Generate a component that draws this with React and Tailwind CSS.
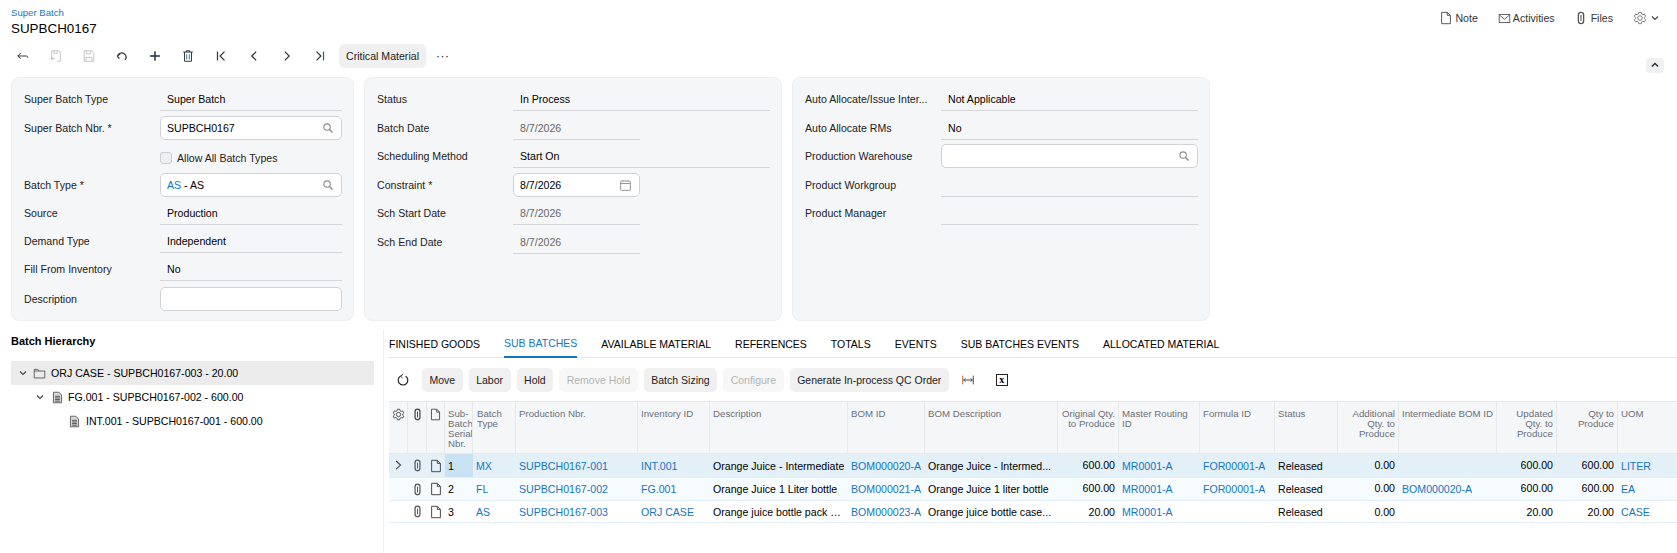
import React from "react";

const Ico = ({ size = 16, className = "", children }) => (
  <svg width={size} height={size} viewBox="0 0 16 16" fill="none" stroke="currentColor" strokeWidth="1.1" className={className}>
    {children}
  </svg>
);

const FileIcon = ({ size = 14, className = "text-[#444]" }) => (
  <Ico size={size} className={className}>
    <path d="M3 1.5h6.5L13 5v9.5H3z" />
    <path d="M9.5 1.5V5H13" />
  </Ico>
);

const ClipIcon = ({ size = 14, className = "text-[#555]" }) => (
  <Ico size={size} className={className}>
    <path d="M5 4.5a3 3 0 0 1 6 0v7a3 3 0 0 1-6 0z" strokeWidth="1.5" />
    <path d="M8 4.5v7" strokeWidth="1.2" />
  </Ico>
);

const GearIcon = ({ size = 14, className = "text-[#555]" }) => (
  <Ico size={size} className={className}>
    <path d="M6.6 1.5h2.8l.4 1.8 1.5.9 1.8-.6 1.4 2.4-1.4 1.2v1.6l1.4 1.2-1.4 2.4-1.8-.6-1.5.9-.4 1.8H6.6l-.4-1.8-1.5-.9-1.8.6-1.4-2.4 1.4-1.2V7.2L1.5 6l1.4-2.4 1.8.6 1.5-.9z" />
    <circle cx="8" cy="8" r="2.6" />
  </Ico>
);

const SearchIcon = () => (
  <Ico size={12} className="text-[#8a8a8a]">
    <circle cx="6.8" cy="6.8" r="4.3" strokeWidth="1.4" />
    <path d="M10 10l4 4" strokeWidth="1.8" />
  </Ico>
);

const DocFilled = () => (
  <Ico size={13} className="text-[#555]">
    <path d="M3 1.5h6.5L13 5v9.5H3z" fill="#d8d8d8" />
    <path d="M5 6.5h6M5 8.5h6M5 10.5h6M5 12.5h6" strokeWidth="1.2" />
  </Ico>
);

const Chevron = () => (
  <Ico size={12} className="text-[#444]">
    <path d="M4 6l4 4 4-4" strokeWidth="1.5" />
  </Ico>
);

const toolbarIcons = [
  { muted: false, el: <><path d="M5.5 4.5L2 8l3.5 3" /><path d="M2 8h9.5c1.2 0 2 .7 2 2" /></> },
  { muted: true, el: <><path d="M3 12V2h8l2 2v10h-4" /><path d="M5.5 2v3h4V2" /><path d="M7 11H2.5M4.5 9l-2 2 2 2" /></> },
  { muted: true, el: <><path d="M2.5 2h9l2 2v10h-11z" /><path d="M5 2v3.5h5V2M4.5 14V9.5h7V14" /></> },
  { muted: false, el: <><path d="M2.5 8L5 11M2.5 8L6 5.5" strokeWidth="1.4" /><path d="M3 7.5C5 4.5 8 4 10.5 5.5c2.5 1.6 3 4.5 1 7" strokeWidth="1.4" /></> },
  { muted: false, el: <path d="M8 2.5v11M2.5 8h11" strokeWidth="1.6" className="text-[#1b2a3a]" /> },
  { muted: false, el: <><path d="M2.5 3.5h11M6 3.5V2h4v1.5M4 3.5V14h8V3.5" /><path d="M6.5 6v6M9.5 6v6" stroke="#3a6fa5" /></> },
  { muted: false, el: <><path d="M4 3v10" strokeWidth="1.4" /><path d="M12 3L7 8l5 5" strokeWidth="1.4" /></> },
  { muted: false, el: <path d="M10.5 3L5.5 8l5 5" strokeWidth="1.4" /> },
  { muted: false, el: <path d="M5.5 3l5 5-5 5" strokeWidth="1.4" /> },
  { muted: false, el: <><path d="M4 3l5 5-5 5" strokeWidth="1.4" /><path d="M12 3v10" strokeWidth="1.4" stroke="#2a5f94" /></> },
];

// read only value with a line under it
const Field = ({ label, value, width = "w-[182px]", muted = false }) => (
  <div className="flex h-[24px] items-center">
    <div className="w-[136px] shrink-0 truncate leading-[14px] text-[#222]">{label}</div>
    <div className={`${width} flex h-[24px] items-center border-b border-[#d4d6d9] px-[7px] pt-[1px] ${muted ? "text-[#666]" : "text-black"}`}>
      {value}
    </div>
  </div>
);

const Input = ({ label, value, icon, width = "w-[182px]" }) => (
  <div className="flex h-[24px] items-center">
    <div className="w-[136px] shrink-0 truncate leading-[14px] text-[#222]">{label}</div>
    <div className={`${width} flex h-[24px] items-center justify-between rounded-[5px] border border-[#cfd2d6] bg-white pl-[6px] pr-[7px] text-black`}>
      <span>{value}</span>
      {icon}
    </div>
  </div>
);

const tabs = ["FINISHED GOODS", "SUB BATCHES", "AVAILABLE MATERIAL", "REFERENCES", "TOTALS", "EVENTS", "SUB BATCHES EVENTS", "ALLOCATED MATERIAL"];

const gridButtons = [
  ["Move", false],
  ["Labor", false],
  ["Hold", false],
  ["Remove Hold", true],
  ["Batch Sizing", false],
  ["Configure", true],
  ["Generate In-process QC Order", false],
];

const columns = [
  { name: "Production Nbr." },
  { name: "Inventory ID" },
  { name: "Description" },
  { name: "BOM ID" },
  { name: "BOM Description" },
  { name: <>Original Qty.<br />to Produce</>, right: true },
  { name: <>Master Routing<br />ID</> },
  { name: "Formula ID" },
  { name: "Status" },
  { name: <>Additional<br />Qty. to<br />Produce</>, right: true },
  { name: "Intermediate BOM ID" },
  { name: <>Updated<br />Qty. to<br />Produce</>, right: true },
  { name: <>Qty to<br />Produce</>, right: true },
  { name: "UOM" },
];

const rows = [
  {
    no: "1", type: "MX", prod: "SUPBCH0167-001", inv: "INT.001", desc: "Orange Juice - Intermediate", bom: "BOM000020-A",
    bomDesc: "Orange Juice - Intermed...", orig: "600.00", route: "MR0001-A", formula: "FOR00001-A", status: "Released",
    add: "0.00", inter: "", upd: "600.00", qty: "600.00", uom: "LITER",
    bg: "bg-[#e4f0f8]", h: "h-[24px]", lift: "pb-[2px]",
  },
  {
    no: "2", type: "FL", prod: "SUPBCH0167-002", inv: "FG.001", desc: "Orange Juice 1 Liter bottle", bom: "BOM000021-A",
    bomDesc: "Orange Juice 1 liter bottle", orig: "600.00", route: "MR0001-A", formula: "FOR00001-A", status: "Released",
    add: "0.00", inter: "BOM000020-A", upd: "600.00", qty: "600.00", uom: "EA",
    bg: "bg-[#f6fbfe]", h: "h-[23px]", lift: "pb-[2px]",
  },
  {
    no: "3", type: "AS", prod: "SUPBCH0167-003", inv: "ORJ CASE", desc: "Orange juice bottle pack …", bom: "BOM000023-A",
    bomDesc: "Orange juice bottle case...", orig: "20.00", route: "MR0001-A", formula: "", status: "Released",
    add: "0.00", inter: "", upd: "20.00", qty: "20.00", uom: "CASE",
    bg: "bg-white", h: "h-[22px]", lift: "",
  },
];

const gridCols = "grid-cols-[19px_19px_18px_28px_43px_122px_72px_138px_77px_133px_61px_81px_75px_63px_61px_98px_60px_61px_59px]";

const Cell = ({ children, link, right, className = "" }) => (
  <div className={`flex min-w-0 items-center px-[3px] ${right ? "justify-end pr-[4px]" : ""} ${link ? "text-[#1376c4]" : "text-black"} ${className}`}>
    <span className="truncate leading-[14px]">{children}</span>
  </div>
);

export default function App() {
  return (
    <div className="h-[553px] w-[1677px] overflow-hidden bg-white font-['Liberation_Sans',Arial,sans-serif] text-[10.6px] leading-none text-black">
      {/* title */}
      <div className="flex h-[44px] items-start justify-between pl-[11px] pr-[16px]">
        <div className="pt-[8px]">
          <div className="text-[9.6px] leading-[10px] text-[#1376c4]">Super Batch</div>
          <div className="pt-[3px] text-[13.4px] leading-[16px]">SUPBCH0167</div>
        </div>
        <div className="flex items-center pt-[11px] text-[#333]">
          <FileIcon size={14} className="text-[#555]" />
          <span className="ml-[2px]">Note</span>
          <Ico size={13} className="ml-[20px] text-[#555]"><rect x="1.5" y="3" width="13" height="10" /><path d="M1.5 3.5L8 9l6.5-5.5" /></Ico>
          <span className="ml-[2px]">Activities</span>
          <ClipIcon size={14} className="ml-[19px] text-[#555]" />
          <span className="ml-[3px]">Files</span>
          <GearIcon size={14} className="ml-[20px] text-[#777]" />
          <span className="ml-[2px]"><Chevron /></span>
        </div>
      </div>

      {/* main toolbar */}
      <div className="flex h-[24px] items-center pl-[6px] pr-[13px]">
        {toolbarIcons.map((t, i) => (
          <div key={i} className={`flex h-[24px] w-[33px] items-center justify-center ${t.muted ? "text-[#c4c4c4]" : "text-[#333]"}`}>
            <Ico size={14}>{t.el}</Ico>
          </div>
        ))}
        <button className="ml-[3px] h-[24px] w-[87px] rounded-[5px] bg-[#f0f0f0] text-[#222]">Critical Material</button>
        <div className="ml-[10px] text-[12px] tracking-[0.5px] text-[#222]">···</div>
        <div className="ml-auto mt-[18px] flex h-[15px] w-[18px] items-center justify-center rounded-[4px] bg-[#f0f0f0] text-[#1b2a3a]">
          <Ico size={10}><path d="M3 10.5L8 5.5l5 5" strokeWidth="2" /></Ico>
        </div>
      </div>

      {/* form panels */}
      <div className="ml-[11px] mt-[9px] flex h-[244px] gap-[10px]">
        <div className="w-[343px] rounded-[8px] border border-[#eceef0] bg-[#f5f6f8] pl-[12px] pr-[11px] pt-[9px]">
          <Field label="Super Batch Type" value="Super Batch" />
          <div className="mt-[5px]"><Input label="Super Batch Nbr. *" value="SUPBCH0167" icon={<SearchIcon />} /></div>
          <div className="mt-[6px] flex h-[24px] items-center pl-[136px] text-[#222]">
            <div className="h-[12px] w-[12px] rounded-[3px] border border-[#c9ccd0] bg-[#eceef0]" />
            <span className="ml-[5px]">Allow All Batch Types</span>
          </div>
          <div className="mt-[3px]">
            <Input label="Batch Type *" value={<><span className="text-[#1376c4]">AS</span> - AS</>} icon={<SearchIcon />} />
          </div>
          <div className="mt-[4px]"><Field label="Source" value="Production" /></div>
          <div className="mt-[4px]"><Field label="Demand Type" value="Independent" /></div>
          <div className="mt-[4px]"><Field label="Fill From Inventory" value="No" /></div>
          <div className="mt-[6px]"><Input label="Description" value="" /></div>
        </div>

        <div className="w-[418px] rounded-[8px] border border-[#eceef0] bg-[#f5f6f8] pl-[12px] pr-[11px] pt-[9px]">
          <Field label="Status" value="In Process" width="w-[258px]" />
          <div className="mt-[5px]"><Field label="Batch Date" value="8/7/2026" width="w-[127px]" muted /></div>
          <div className="mt-[4px]"><Field label="Scheduling Method" value="Start On" width="w-[258px]" /></div>
          <div className="mt-[5px]">
            <Input
              label="Constraint *"
              value="8/7/2026"
              width="w-[127px]"
              icon={<Ico size={13} className="text-[#888]"><rect x="2" y="2.5" width="12" height="11.5" rx="1" /><path d="M2 5.5h12M5 1.5v1M11 1.5v1" /></Ico>}
            />
          </div>
          <div className="mt-[4px]"><Field label="Sch Start Date" value="8/7/2026" width="w-[127px]" muted /></div>
          <div className="mt-[5px]"><Field label="Sch End Date" value="8/7/2026" width="w-[127px]" muted /></div>
        </div>

        <div className="w-[418px] rounded-[8px] border border-[#eceef0] bg-[#f5f6f8] pl-[12px] pt-[9px]">
          <Field label="Auto Allocate/Issue Inter..." value="Not Applicable" width="w-[257px]" />
          <div className="mt-[5px]"><Field label="Auto Allocate RMs" value="No" width="w-[257px]" /></div>
          <div className="mt-[4px]"><Input label="Production Warehouse" value="" width="w-[257px]" icon={<SearchIcon />} /></div>
          <div className="mt-[5px]"><Field label="Product Workgroup" value="" width="w-[257px]" /></div>
          <div className="mt-[4px]"><Field label="Product Manager" value="" width="w-[257px]" /></div>
        </div>
      </div>

      {/* bottom */}
      <div className="mt-[9px] flex h-[223px]">
        <div className="w-[384px] shrink-0 border-r border-[#eceef0] pl-[11px] pr-[9px]">
          <div className="pt-[6px] text-[11px] font-bold leading-[11px]">Batch Hierarchy</div>
          <div className="mt-[14px]">
            <div className="flex h-[24px] items-center bg-[#ebebeb] pl-[6px]">
              <Chevron />
              <Ico size={13} className="ml-[4px] text-[#555]"><path d="M1.5 3h4.5l1.5 2h7v8.5h-13z" /><path d="M1.5 5h6" /></Ico>
              <span className="ml-[5px]">ORJ CASE - SUPBCH0167-003 - 20.00</span>
            </div>
            <div className="flex h-[24px] items-center pl-[23px]">
              <Chevron />
              <span className="ml-[5px]"><DocFilled /></span>
              <span className="ml-[4px]">FG.001 - SUPBCH0167-002 - 600.00</span>
            </div>
            <div className="flex h-[24px] items-center pl-[57px]">
              <DocFilled />
              <span className="ml-[5px]">INT.001 - SUPBCH0167-001 - 600.00</span>
            </div>
          </div>
        </div>

        <div className="min-w-0 flex-1 pl-[5px]">
          {/* tabs */}
          <div className="flex h-[28px] gap-[24px] border-b border-[#e3e5e8] text-[10.5px]">
            {tabs.map((t) => (
              <div
                key={t}
                className={`flex h-[28px] items-center ${t === "SUB BATCHES" ? "border-b-2 border-[#1376c4] text-[#1376c4]" : "text-black"}`}
              >
                {t}
              </div>
            ))}
          </div>

          {/* grid toolbar */}
          <div className="mt-[10px] flex h-[24px] items-center">
            <div className="flex h-[24px] w-[28px] items-center justify-center text-[#222]">
              <Ico size={14}><path d="M5 3.6a5.5 5.5 0 1 0 6 0" strokeWidth="1.3" /><path d="M8 1.5L5 3.6l2.5 2" strokeWidth="1.1" /></Ico>
            </div>
            <div className="ml-[5px] flex gap-[6px] text-[10.5px]">
              {gridButtons.map(([name, off]) => (
                <button key={name} className={`h-[24px] rounded-[5px] px-[7.5px] ${off ? "bg-[#f7f7f7] text-[#b4b4b4]" : "bg-[#f0f0f0] text-[#222]"}`}>
                  {name}
                </button>
              ))}
            </div>
            <div className="ml-[2px] flex h-[24px] w-[34px] items-center justify-center text-[#444]">
              <Ico size={14}><path d="M2 3v10" stroke="#b5651d" /><path d="M14 3v10M3 8h10M3 8l2-2M3 8l2 2M13 8l-2-2M13 8l-2 2" /></Ico>
            </div>
            <div className="flex h-[24px] w-[34px] items-center justify-center">
              <div className="flex h-[12px] w-[12px] items-center justify-center border border-[#222] font-['Liberation_Serif',serif] text-[10px] font-bold leading-none">x</div>
            </div>
          </div>

          {/* grid */}
          <div className="mt-[9px] w-[1288px]">
            <div className={`grid h-[53px] ${gridCols} border-y border-[#e6e8ea] bg-[#f5f6f8] text-[9.7px] leading-[10px] text-[#6a7078]`}>
              <div className="flex justify-center border-r border-[#e6e8ea] pt-[6px]"><GearIcon size={13} className="text-[#444]" /></div>
              <div className="flex justify-center border-r border-[#e6e8ea] pt-[6px]"><ClipIcon size={13} className="text-[#444]" /></div>
              <div className="flex justify-center border-r border-[#e6e8ea] pt-[6px]"><FileIcon size={13} /></div>
              <div className="overflow-hidden whitespace-nowrap border-r border-[#e6e8ea] pl-[3px] pt-[7px]">Sub-<br />Batch<br />Serial<br />Nbr.</div>
              <div className="border-r border-[#e6e8ea] pl-[4px] pt-[7px]">Batch<br />Type</div>
              {columns.map((c, i) => (
                <div key={i} className={`whitespace-nowrap border-r border-[#e6e8ea] pl-[3px] pt-[7px] last:border-r-0 ${c.right ? "pl-0 pr-[3px] text-right" : ""}`}>
                  {c.name}
                </div>
              ))}
            </div>
            {rows.map((r, i) => (
              <div key={r.no} className={`grid ${r.h} ${gridCols} border-b border-[#e2eff8] ${r.bg}`}>
                <div className="flex items-center justify-center text-[#444]">
                  {i === 0 && <Ico size={13}><path d="M5 2.5l5.5 5-5.5 5" strokeWidth="1.4" /></Ico>}
                </div>
                <div className="flex items-center justify-center"><ClipIcon size={13} /></div>
                <div className="flex items-center justify-center"><FileIcon size={14} /></div>
                <Cell className={i === 0 ? "bg-[#c9e2f3]" : ""}>{r.no}</Cell>
                <Cell link>{r.type}</Cell>
                <Cell link>{r.prod}</Cell>
                <Cell link>{r.inv}</Cell>
                <Cell>{r.desc}</Cell>
                <Cell link>{r.bom}</Cell>
                <Cell>{r.bomDesc}</Cell>
                <Cell right className={r.lift}>{r.orig}</Cell>
                <Cell link>{r.route}</Cell>
                <Cell link>{r.formula}</Cell>
                <Cell>{r.status}</Cell>
                <Cell right className={r.lift}>{r.add}</Cell>
                <Cell link>{r.inter}</Cell>
                <Cell right className={r.lift}>{r.upd}</Cell>
                <Cell right className={r.lift}>{r.qty}</Cell>
                <Cell link>{r.uom}</Cell>
              </div>
            ))}
          </div>
        </div>
      </div>
    </div>
  );
}
